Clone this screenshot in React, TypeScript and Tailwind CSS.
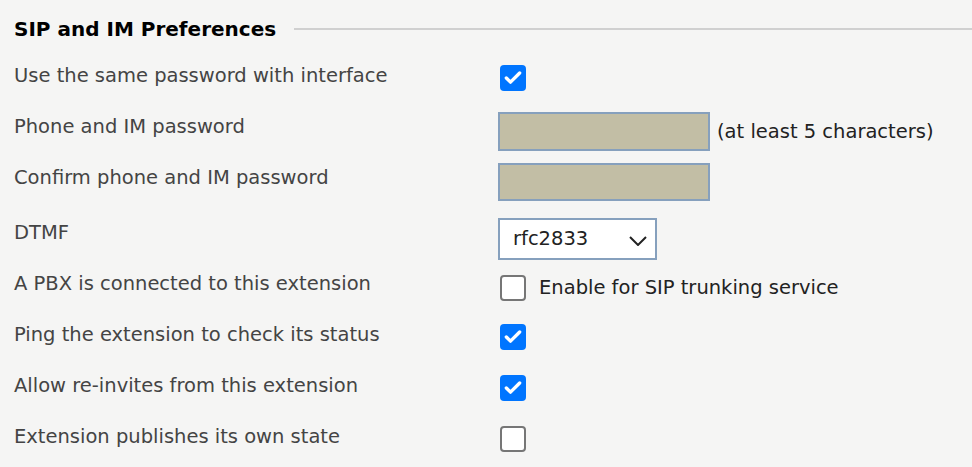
import { Check } from "lucide-react";

const font = { fontFamily: '"DejaVu Sans", sans-serif' };

function Box({ checked }: { checked: boolean }) {
  if (checked)
    return (
      <span className="flex h-[26px] w-[26px] items-center justify-center rounded-[4px] bg-[#0075ff]">
        <Check size={20} strokeWidth={4} className="text-white" />
      </span>
    );
  return <span className="block h-[26px] w-[26px] rounded-[4px] border-2 border-[#767676] bg-white" />;
}

function Row({ label, h = "h-[51px]", pt = "pt-[10px]", children }: { label: string; h?: string; pt?: string; children: React.ReactNode }) {
  return (
    <div className={`flex ${h}`}>
      <div className={`w-[484px] shrink-0 ${pt} text-[#444]`}>{label}</div>
      <div className="flex-1">{children}</div>
    </div>
  );
}

export default function App() {
  return (
    <div className="h-[467px] w-[972px] overflow-hidden bg-[#f5f5f4] pl-[14px] text-[19.5px]" style={font}>
      <div className="flex h-[51px] items-center pt-[6px]">
        <h2 className="text-[20px] font-bold text-black">SIP and IM Preferences</h2>
        <div className="ml-[18px] h-[2px] flex-1 bg-[#d0d0d0]" />
      </div>

      <Row label="Use the same password with interface">
        <div className="ml-[2px] mt-[14px]"><Box checked /></div>
      </Row>
      <Row label="Phone and IM password">
        <div className="mt-[10px] flex items-center">
          <div className="h-[39px] w-[212px] border-2 border-[#86a0bd] bg-[#c2bea5]" />
          <span className="ml-[7px] text-[#222]">(at least 5 characters)</span>
        </div>
      </Row>
      <Row label="Confirm phone and IM password">
        <div className="mt-[10px] h-[38px] w-[212px] border-2 border-[#86a0bd] bg-[#c2bea5]" />
      </Row>
      <Row label="DTMF" h="h-[55px]" pt="pt-[14px]">
        <div className="mt-[14px] flex h-[42px] w-[159px] items-center justify-between border-2 border-[#86a0bd] bg-white pl-[13px] pr-[8px] text-[#222]">
          <span>rfc2833</span>
          <svg width="18" height="10" viewBox="0 0 18 10" fill="none" className="mt-[3px]">
            <polyline points="1,1 9,9 17,1" stroke="#222" strokeWidth="2" />
          </svg>
        </div>
      </Row>
      <Row label="A PBX is connected to this extension">
        <div className="ml-[2px] mt-[14px] flex items-center gap-[13px]">
          <Box checked={false} />
          <span className="text-[#222]">Enable for SIP trunking service</span>
        </div>
      </Row>
      <Row label="Ping the extension to check its status">
        <div className="ml-[2px] mt-[14px]"><Box checked /></div>
      </Row>
      <Row label="Allow re-invites from this extension">
        <div className="ml-[2px] mt-[14px]"><Box checked /></div>
      </Row>
      <Row label="Extension publishes its own state">
        <div className="ml-[2px] mt-[14px]"><Box checked={false} /></div>
      </Row>
    </div>
  );
}
